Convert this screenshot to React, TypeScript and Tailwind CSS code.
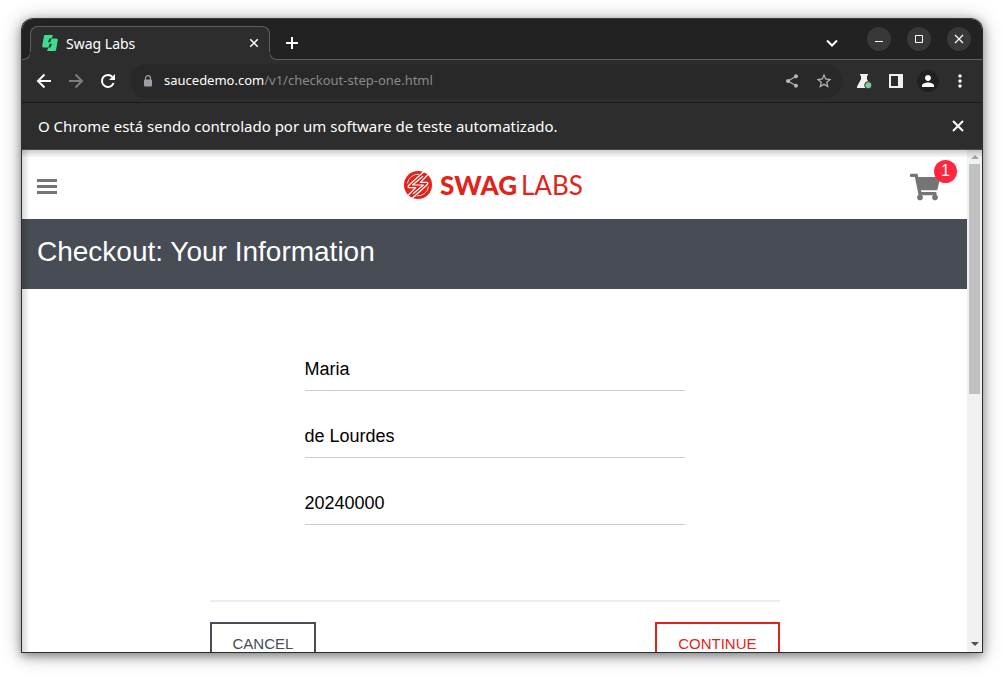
import { useState } from "react";
import { MdMoreVert, MdPerson, MdShare, MdStarBorder } from "react-icons/md";
import { FaShoppingCart } from "react-icons/fa";

const iconButton = "flex size-8 shrink-0 items-center justify-center";
const windowButton = "flex size-6 items-center justify-center rounded-full bg-[#383838] text-white";
const actionButton = "h-11 border-2 px-[21px] text-[15px]";

const crossPath = "M3 3 13 13M13 3 3 13";

function LineIcon({ d, size, weight = 2 }: { d: string; size: number; weight?: number }) {
  return (
    <svg viewBox="0 0 16 16" width={size} height={size} aria-hidden="true">
      <path d={d} fill="none" stroke="currentColor" strokeWidth={weight} />
    </svg>
  );
}

function Favicon() {
  return (
    <svg viewBox="0 0 16 16" className="size-4 shrink-0" aria-hidden="true">
      <path
        d="M3 0H11L9.6 3.6H7.4L6 7.2H8.4L6.4 12.4H1.6Q0 12.4.2 10.8L2 1Q2.2 0 3 0Z"
        fill="#3ddc91"
      />
      <path
        d="M13 16H5L6.4 12.4H8.6L10 8.8H7.6L9.6 3.6H14.4Q16 3.6 15.8 5.2L14 15Q13.8 16 13 16Z"
        fill="#3ddc91"
      />
    </svg>
  );
}

function LogoMark() {
  return (
    <svg viewBox="0 0 28 28" className="size-7 shrink-0" aria-hidden="true">
      <circle cx="14" cy="14" r="14" fill="#e2231a" />
      <g fill="none" stroke="#fff" strokeLinejoin="round">
        <path d="M20.5 0 4.6 14.6Q3.4 16.6 5.6 16.6H11.6L4.4 24" strokeWidth="1.3" />
        <path d="M7.5 28 23.4 13.4Q24.6 11.4 22.4 11.4H16.4L23.6 4" strokeWidth="1.3" />
        <path d="M19 5.2 8.6 14H19.4L9 22.8" strokeWidth="1.2" />
        <path d="M15 3.2A11 11 0 0 0 3.4 12.4" strokeWidth=".8" />
        <path d="M13 24.8A11 11 0 0 0 24.6 15.6" strokeWidth=".8" />
      </g>
    </svg>
  );
}

function Flask() {
  return (
    <svg viewBox="0 0 16 16" className="size-4" aria-hidden="true">
      <path d="M4 1H12V2.6H11V6.2L15 13.4Q15.6 15 14 15H2Q.4 15 1 13.4L5 6.2V2.6H4Z" fill="#f1f1f1" />
      <circle cx="12.3" cy="12.2" r="3.6" fill="#81c995" stroke="#2d2d2d" strokeWidth="1" />
    </svg>
  );
}

function Lock() {
  return (
    <svg viewBox="0 0 10 12" className="mr-[11px] h-3 w-[10px] shrink-0 text-[#9aa0a6]" aria-hidden="true">
      <path d="M2.5 5V3.2a2.5 2.5 0 0 1 5 0V5" fill="none" stroke="currentColor" strokeWidth="1.2" />
      <rect x="1" y="4.5" width="8" height="7" rx="1" fill="currentColor" />
    </svg>
  );
}

function ReloadIcon() {
  return (
    <svg viewBox="0 0 16 16" className="size-4" aria-hidden="true">
      <path d="M13.6 10A6 6 0 1 1 12.4 3.9" fill="none" stroke="currentColor" strokeWidth="2" />
      <path d="M15 1V7H9Z" fill="currentColor" />
    </svg>
  );
}

function TitleBar() {
  return (
    <header className="flex h-[41px] shrink-0 bg-[#222222]">
      <div className="flex w-[9px] shrink-0 items-end">
        <div className="h-2 w-full bg-[#2d2d2d]">
          <div className="h-full w-full rounded-br-lg border-r border-b border-[#606060] bg-[#222222]" />
        </div>
      </div>
      <div className="relative -ml-px mt-[7px] flex w-60 min-w-0 items-center gap-2 rounded-t-lg bg-[#2d2d2d] pr-2 pl-3 text-white">
        <div className="pointer-events-none absolute inset-x-0 top-0 bottom-2 rounded-t-lg border-x border-t border-[#606060]" />
        <Favicon />
        <span className="flex-1 truncate text-[14px]">Swag Labs</span>
        <button type="button" aria-label="Close tab" className="flex size-4 items-center justify-center">
          <LineIcon d={crossPath} size={12} />
        </button>
      </div>
      <div className="-ml-px flex w-2 shrink-0 items-end">
        <div className="h-2 w-full bg-[#2d2d2d]">
          <div className="h-full w-full rounded-bl-lg border-b border-l border-[#606060] bg-[#222222]" />
        </div>
      </div>
      <div className="flex flex-1 items-center justify-between border-b border-[#606060] pr-[11px] pl-[3px] text-white">
        <button type="button" aria-label="New tab" className="mt-[7px] flex size-6 items-center justify-center">
          <LineIcon d="M8 2V14M2 8H14" size={16} />
        </button>
        <div className="flex items-center gap-4">
          <button type="button" aria-label="Search tabs" className="mt-[7px] mr-[7px] flex size-6 items-center justify-center">
            <LineIcon d="M3 5.5 8 10.5 13 5.5" size={16} />
          </button>
          <button type="button" aria-label="Minimize" className={windowButton}>
            <svg viewBox="0 0 10 10" className="size-[10px]" aria-hidden="true">
              <path d="M1 7.5H9" stroke="currentColor" />
            </svg>
          </button>
          <button type="button" aria-label="Maximize" className={windowButton}>
            <svg viewBox="0 0 10 10" className="size-[10px]" aria-hidden="true">
              <path d="M1.5 1.5H8.5V8.5H1.5Z" fill="none" stroke="currentColor" />
            </svg>
          </button>
          <button type="button" aria-label="Close window" className={windowButton}>
            <svg viewBox="0 0 10 10" className="size-[10px]" aria-hidden="true">
              <path d="M1 1 9 9M9 1 1 9" fill="none" stroke="currentColor" strokeWidth="1.2" />
            </svg>
          </button>
        </div>
      </div>
    </header>
  );
}

function Toolbar() {
  return (
    <nav className="flex h-[43px] shrink-0 items-center border-b border-[#1a1a1a] bg-[#2d2d2d] px-[6px] text-white">
      <button type="button" aria-label="Back" className={iconButton}>
        <LineIcon d="M15 8H2.5M8.5 1.5 2 8 8.5 14.5" size={16} />
      </button>
      <button type="button" aria-label="Forward" className={`${iconButton} text-[#7d7d7d]`}>
        <LineIcon d="M1 8H13.5M7.5 1.5 14 8 7.5 14.5" size={16} />
      </button>
      <button type="button" aria-label="Reload" className={iconButton}>
        <ReloadIcon />
      </button>
      <div className="mx-[6px] flex h-[34px] min-w-0 flex-1 items-center rounded-full bg-[#282828] pr-[2px] pl-[13px]">
        <Lock />
        <p className="flex-1 truncate text-[13px]">
          saucedemo.com<span className="text-[#8a8a8a]">/v1/checkout-step-one.html</span>
        </p>
        <button type="button" aria-label="Share" className={`${iconButton} text-[#b8b8b8]`}>
          <MdShare size={16} />
        </button>
        <button type="button" aria-label="Bookmark" className={`${iconButton} text-[#b8b8b8]`}>
          <MdStarBorder size={18} />
        </button>
      </div>
      <button type="button" aria-label="Experiments" className={iconButton}>
        <Flask />
      </button>
      <button type="button" aria-label="Side panel" className={iconButton}>
        <svg viewBox="0 0 14 14" className="size-[14px]" aria-hidden="true">
          <path d="M0 0H14V14H0ZM2 2V12H9V2Z" fill="#f1f1f1" fillRule="evenodd" />
        </svg>
      </button>
      <button type="button" aria-label="Profile" className={iconButton}>
        <span className="flex size-[22px] items-center justify-center rounded-full bg-[#202124]">
          <MdPerson size={18} />
        </span>
      </button>
      <button type="button" aria-label="Menu" className={iconButton}>
        <MdMoreVert size={20} />
      </button>
    </nav>
  );
}

function Field({ id, label, initial }: { id: string; label: string; initial: string }) {
  const [value, setValue] = useState(initial);
  return (
    <input
      id={id}
      aria-label={label}
      value={value}
      onChange={(event) => setValue(event.target.value)}
      className="h-11 w-full border-b border-[#cccccc] bg-transparent pt-[2px] text-[18px] text-black outline-none"
    />
  );
}

function CheckoutPage() {
  return (
    <div className="min-w-0 flex-1 overflow-hidden bg-white font-['Liberation_Sans',Arial,sans-serif]">
      <div className="flex h-[69px] items-center justify-between pr-[10px] pl-[15px]">
        <button type="button" aria-label="Open menu" className="mt-1 flex w-10 flex-col gap-[3px]">
          <span className="h-[3px] w-5 bg-[#757575]" />
          <span className="h-[3px] w-5 bg-[#757575]" />
          <span className="h-[3px] w-5 bg-[#757575]" />
        </button>
        <div className="flex items-center gap-2 font-['Lato',sans-serif] text-[26px] leading-7 text-[#e2231a]">
          <LogoMark />
          <span className="flex gap-1">
            <span className="font-black">SWAG</span>
            <span className="font-normal">LABS</span>
          </span>
        </div>
        <a href="#cart" aria-label="Cart, 1 item" className="relative flex h-10 w-[47px] items-center text-[#757575]">
          <FaShoppingCart size={30} className="mt-1" />
          <span className="absolute -top-[5px] right-0 flex size-[23px] items-center justify-center rounded-full bg-[#ff2640] text-[16px] text-white">
            1
          </span>
        </a>
      </div>
      <h1 className="flex h-[70px] items-center bg-[#474c55] px-[15px] pb-1 text-[28px] text-white">
        Checkout: Your Information
      </h1>
      <form className="mx-auto mt-[58px] w-[570px] max-w-full" onSubmit={(event) => event.preventDefault()}>
        <div className="mx-auto flex w-2/3 flex-col gap-[23px]">
          <Field id="first-name" label="First Name" initial="Maria" />
          <Field id="last-name" label="Last Name" initial="de Lourdes" />
          <Field id="postal-code" label="Zip/Postal Code" initial="20240000" />
        </div>
        <div className="mt-[75px] flex justify-between border-t-2 border-[#ededed] pt-5">
          <button type="button" className={`${actionButton} border-[#474c55] text-[#474c55]`}>
            CANCEL
          </button>
          <button type="submit" className={`${actionButton} border-[#e2231a] text-[#e2231a]`}>
            CONTINUE
          </button>
        </div>
      </form>
    </div>
  );
}

function ScrollTrack() {
  return (
    <div className="flex w-[15px] shrink-0 flex-col items-center justify-between bg-[#f1f1f1]" aria-hidden="true">
      <div className="flex h-1/2 w-full flex-col items-center">
        <svg viewBox="0 0 8 4" className="my-[5px] h-1 w-2 shrink-0">
          <path d="M0 4 4 0 8 4Z" fill="#a3a3a3" />
        </svg>
        <div className="h-[230px] w-[11px] bg-[#c1c1c1]" />
      </div>
      <svg viewBox="0 0 8 4" className="mb-[6px] h-1 w-2">
        <path d="M0 0H8L4 4Z" fill="#505050" />
      </svg>
    </div>
  );
}

export default function App() {
  return (
    <div className="flex h-screen bg-white px-[21px] pt-[18px] pb-6 font-['Noto_Sans',sans-serif]">
      <div className="flex min-w-0 flex-1 flex-col overflow-hidden rounded-t-xl border border-[#2b2d30] border-t-[#3a3a3a] shadow-[0_3px_10px_rgba(0,0,0,0.35),0_2px_20px_rgba(0,0,0,0.3)]">
        <TitleBar />
        <Toolbar />
        <div className="flex h-[47px] shrink-0 items-center justify-between border-b border-[#4a4a4a] bg-[#2d2d2d] pr-[14px] pl-4 text-white">
          <p className="truncate text-[15px]">O Chrome está sendo controlado por um software de teste automatizado.</p>
          <button type="button" aria-label="Dismiss" className="flex size-5 items-center justify-center">
            <LineIcon d={crossPath} size={16} />
          </button>
        </div>
        <main className="relative flex min-h-0 flex-1">
          <CheckoutPage />
          <ScrollTrack />
          <div className="pointer-events-none absolute inset-x-0 top-0 h-2 bg-linear-to-b from-black/20 to-transparent" />
          <div className="pointer-events-none absolute inset-y-0 left-0 w-2 bg-linear-to-r from-black/15 to-transparent" />
        </main>
      </div>
    </div>
  );
}
